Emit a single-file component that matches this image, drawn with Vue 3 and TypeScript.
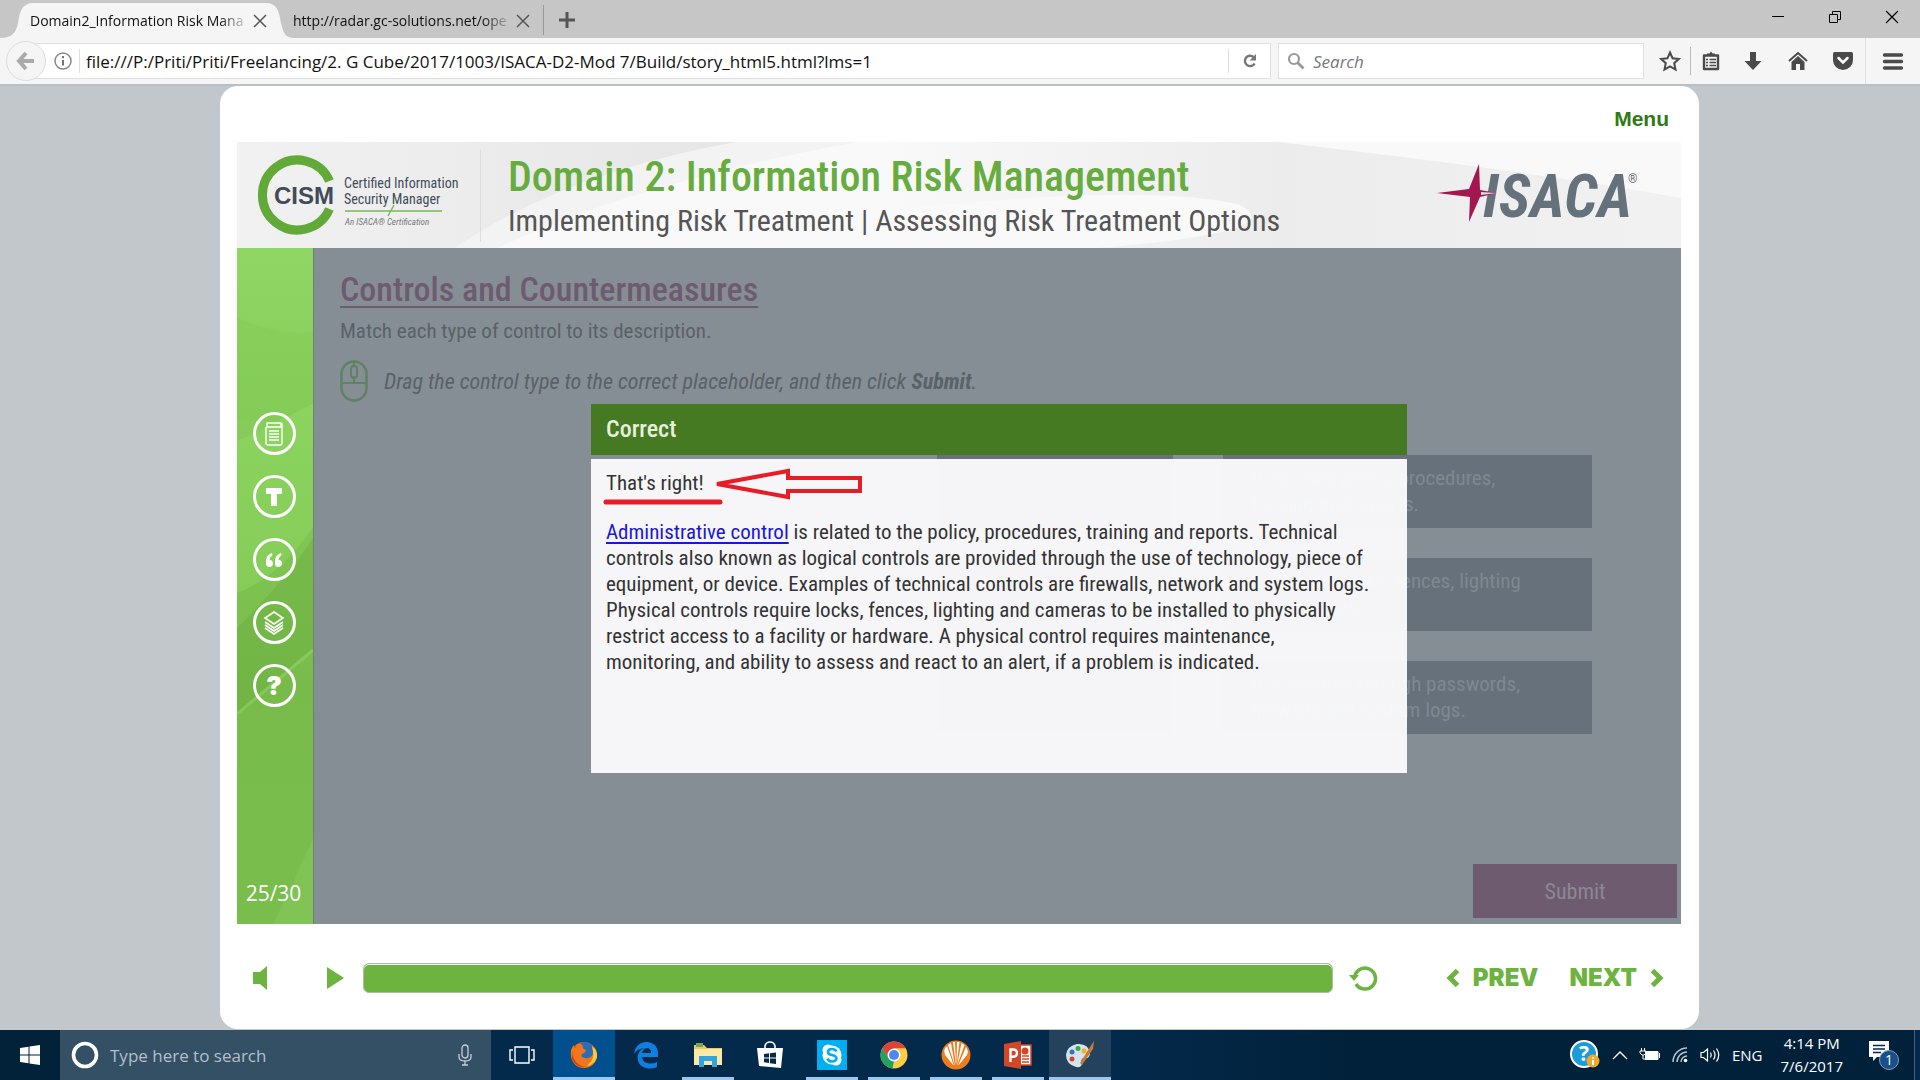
<script setup lang="ts">
interface TaskItem {
  id: string
  label: string
  state: 'idle' | 'open' | 'active' | 'current'
}

const tasks: TaskItem[] = [
  { id: 'view', label: 'Task view', state: 'idle' },
  { id: 'firefox', label: 'Firefox', state: 'current' },
  { id: 'edge', label: 'Edge', state: 'idle' },
  { id: 'files', label: 'File Explorer', state: 'open' },
  { id: 'store', label: 'Store', state: 'idle' },
  { id: 'skype', label: 'Skype', state: 'open' },
  { id: 'chrome', label: 'Chrome', state: 'open' },
  { id: 'shell', label: 'Media', state: 'open' },
  { id: 'ppt', label: 'PowerPoint', state: 'open' },
  { id: 'paint', label: 'Paint', state: 'active' },
]

const sideTools = ['Notes', 'Transcript', 'Glossary', 'Resources', 'Help']

const matches = [
  { control: 'Administrative', text: ['It includes policy, procedures,', 'training and reports.'] },
  { control: 'Physical', text: ['It includes locks, fences, lighting', 'and cameras.'] },
  { control: 'Technical', text: ['It is ensured through passwords,', 'firewalls and system logs.'] },
]

const feedback = [
  ' is related to the policy, procedures, training and reports. Technical',
  'controls also known as logical controls are provided through the use of technology, piece of',
  'equipment, or device. Examples of technical controls are firewalls, network and system logs.',
  'Physical controls require locks, fences, lighting and cameras to be installed to physically',
  'restrict access to a facility or hardware. A physical control requires maintenance,',
  'monitoring, and ability to assess and react to an alert, if a problem is indicated.',
].join('\n')
</script>

<template>
  <div class="desktop">
    <header class="tabs">
      <div class="tab active">
        <svg class="tab-shape" viewBox="0 0 294 35" preserveAspectRatio="none" aria-hidden="true">
          <path d="M0 35C12 35 16 30 18 20C20 8 22 0 34 0H266C277 0 279 8 281 20C283 30 286 35 294 35Z" fill="#f5f5f5" />
        </svg>
        <span class="tab-title">Domain2_Information Risk Mana</span>
        <button class="plain" aria-label="Close tab"><svg width="14" height="14" viewBox="0 0 14 14"><path d="M1 1L13 13M13 1L1 13" stroke="#555" stroke-width="1.5" /></svg></button>
      </div>
      <div class="tab second">
        <span class="tab-title">http://radar.gc-solutions.net/ope</span>
        <button class="plain" aria-label="Close tab"><svg width="14" height="14" viewBox="0 0 14 14"><path d="M1 1L13 13M13 1L1 13" stroke="#555" stroke-width="1.5" /></svg></button>
      </div>
      <button class="plain new-tab" aria-label="New tab"><svg width="16" height="16" viewBox="0 0 16 16"><path d="M8 0V16M0 8H16" stroke="#555" stroke-width="3" /></svg></button>
      <div class="window-buttons">
        <button class="plain" aria-label="Minimize"><svg width="12" height="12" viewBox="0 0 12 12"><path d="M0 5.5H12" stroke="#000" /></svg></button>
        <button class="plain" aria-label="Restore"><svg width="12" height="12" viewBox="0 0 12 12"><path d="M.5 3.500H8.500V11.500H.5ZM3.500 3.500V.5H11.500V8.500H8.500" fill="none" stroke="#000" /></svg></button>
        <button class="plain" aria-label="Close"><svg width="14" height="14" viewBox="0 0 14 14"><path d="M1 1L13 13M13 1L1 13" stroke="#000" stroke-width="1.200" /></svg></button>
      </div>
    </header>

    <nav class="toolbar">
      <button class="back" aria-label="Back"><svg width="20" height="20" viewBox="0 0 20 20"><path d="M10 2L3 10L10 18M4 10H18" fill="none" stroke="#aaa" stroke-width="4" /></svg></button>
      <div class="address">
        <svg class="info" width="18" height="18" viewBox="0 0 18 18"><circle cx="9" cy="9" r="8" fill="none" stroke="#888" stroke-width="1.500" /><path d="M9 8V13.500M9 4V6.200" stroke="#777" stroke-width="2" /></svg>
        <input class="url" aria-label="Address" value="file:///P:/Priti/Priti/Freelancing/2. G Cube/2017/1003/ISACA-D2-Mod 7/Build/story_html5.html?lms=1" />
        <button class="plain reload" aria-label="Reload"><svg width="16" height="16" viewBox="0 0 16 16"><path d="M12.600 10.500A5.200 5.200 0 1 1 11.500 4" fill="none" stroke="#777" stroke-width="2.400" /><path d="M14 1V7.500H7.500Z" fill="#777" /></svg></button>
      </div>
      <div class="search">
        <svg width="18" height="18" viewBox="0 0 18 18"><circle cx="7" cy="7" r="5" fill="none" stroke="#999" stroke-width="2.200" /><path d="M10.500 10.500L16.500 16.500" stroke="#999" stroke-width="2.800" /></svg>
        <input aria-label="Search" placeholder="Search" />
      </div>
      <div class="tools">
        <button class="plain" aria-label="Bookmark"><svg width="22" height="22" viewBox="0 0 22 22"><path d="M11 2.500L13.600 8.300L19.800 9L15.200 13.200L16.500 19.500L11 16.300L5.500 19.500L6.800 13.200L2.200 9L8.400 8.300Z" fill="none" stroke="#4a4a4a" stroke-width="2" /></svg></button>
        <button class="plain clip" aria-label="Bookmarks list"><svg width="20" height="20" viewBox="0 0 20 20"><path d="M3 4.500H17V18H3Z" fill="none" stroke="#4a4a4a" stroke-width="2.400" stroke-linejoin="round" /><path d="M6 4V2.500H8.500L10 .5L11.500 2.500H14V4" fill="#4a4a4a" /><path d="M5 8.500H7M8.500 8.500H15M5 11.500H7M8.500 11.500H15M5 14.500H7M8.500 14.500H15" stroke="#4a4a4a" stroke-width="1.500" /></svg></button>
        <button class="plain" aria-label="Downloads"><svg width="20" height="20" viewBox="0 0 20 20"><path d="M7 1H13V10H18.500L10 19L1.500 10H7Z" fill="#4a4a4a" /></svg></button>
        <button class="plain" aria-label="Home"><svg width="20" height="20" viewBox="0 0 20 20"><path d="M1 10L10 2L19 10" fill="none" stroke="#4a4a4a" stroke-width="2" /><path d="M10 5L16.500 11V19H12V13H8V19H3.500V11Z" fill="#4a4a4a" /></svg></button>
        <button class="plain" aria-label="Pocket"><svg width="22" height="20" viewBox="0 0 22 20"><path d="M2.500 1H19.500Q21 1 21 3V9A10 10 0 0 1 1 9V3Q1 1 2.500 1Z" fill="#4a4a4a" /><path d="M6.500 7L11 11.500L15.500 7" fill="none" stroke="#fff" stroke-width="2.500" stroke-linecap="round" /></svg></button>
        <button class="plain burger" aria-label="Open menu"><svg width="20" height="17" viewBox="0 0 20 17"><path d="M1.500 2H18.500M1.500 8.500H18.500M1.500 15H18.500" stroke="#4a4a4a" stroke-width="3.400" stroke-linecap="round" /></svg></button>
      </div>
    </nav>

    <main class="page">
      <div class="player">
        <div class="menu-row"><button class="plain menu">Menu</button></div>

        <div class="banner">
          <svg class="sheen" viewBox="0 0 1443 106" preserveAspectRatio="none" aria-hidden="true">
            <defs>
              <linearGradient id="sheen-left" x1="0" x2="1"><stop offset="0" stop-color="#f1f1f1" /><stop offset="1" stop-color="#e6e6e6" /></linearGradient>
              <linearGradient id="sheen-right" x1="0" x2="1"><stop offset="0" stop-color="#f9f9f9" /><stop offset=".5" stop-color="#ececec" /><stop offset="1" stop-color="#f1f1f1" /></linearGradient>
            </defs>
            <path d="M0 0H500Q330 30 218 106H0Z" fill="url(#sheen-left)" />
            <path d="M500 0Q330 30 218 106H260Q400 40 620 0Z" fill="#f3f3f3" />
            <path d="M640 0H1040Q1300 30 1443 56V106H860Q1060 90 1000 62Q900 40 640 70Z" fill="url(#sheen-right)" />
          </svg>
          <svg class="cism" width="210" height="90" viewBox="0 0 210 90" role="img" aria-label="CISM">
            <path d="M72.500 31A35 35 0 1 0 72.500 59" fill="none" stroke="#62aa37" stroke-width="9" />
            <text x="17" y="54" class="cism-name">CISM</text>
            <text x="87" y="38" class="cism-line">Certified Information</text>
            <text x="87" y="54" class="cism-line">Security Manager</text>
            <path d="M88 61H185M131 66L137 55" stroke="#79b956" stroke-width="1.500" />
            <text x="88" y="75" class="cism-small">An ISACA® Certification</text>
          </svg>
          <div class="titles">
            <h1>Domain 2: Information Risk Management</h1>
            <h2>Implementing Risk Treatment | Assessing Risk Treatment Options</h2>
          </div>
          <svg class="isaca" width="204" height="64" viewBox="0 0 204 64" role="img" aria-label="ISACA">
            <text x="46" y="54" class="isaca-name">ISACA</text>
            <text x="191" y="20" class="isaca-reg">®</text>
            <path d="M0 30L32 26L42 1L43 27L60 30L43 34L32 59L33 34Z" fill="#a3164f" />
            <path d="M44 29L60 30L44 32Z" fill="#d9dde0" />
          </svg>
        </div>

        <div class="slide">
          <aside class="sidebar">
            <svg class="streaks" viewBox="0 0 76 676" preserveAspectRatio="none" aria-hidden="true">
              <path d="M0 70Q50 90 76 84V155Q40 180 0 170Z" fill="#80c853" opacity=".35" />
              <path d="M0 193Q40 175 76 155V280Q40 330 0 345Z" fill="#93db66" opacity=".4" />
              <path d="M0 380Q50 330 76 290V400L0 468Z" fill="#68ad3c" opacity=".4" />
              <path d="M0 466L76 402" stroke="#93d36a" stroke-width="3" opacity=".6" />
              <path d="M36 676Q54 640 76 590V676Z" fill="#86ca5b" opacity=".5" />
            </svg>
            <div class="side-tools">
              <button v-for="(tool, i) in sideTools" :key="tool" class="round" :aria-label="tool">
                <svg v-if="i === 0" width="22" height="26" viewBox="0 0 22 26"><path d="M4 2H18V6H4ZM3 6V22Q3 24 5 24H17Q19 24 19 22V2M6 10H16M6 13H16M6 16H16M6 19H16" fill="none" stroke="#fff" stroke-width="1.400" /></svg>
                <svg v-else-if="i === 1" width="22" height="22" viewBox="0 0 22 22"><path d="M3 2H19V8H14V20H8V8H3Z" fill="#fff" /></svg>
                <svg v-else-if="i === 2" width="18" height="16" viewBox="0 0 18 16"><path d="M7 1Q1 3 1 9V12A3.500 3.500 0 1 0 4.500 8Q4.500 5 7.500 3ZM16 1Q10 3 10 9V12A3.500 3.500 0 1 0 13.500 8Q13.500 5 16.500 3Z" fill="#fff" /></svg>
                <svg v-else-if="i === 3" width="22" height="26" viewBox="0 0 22 26"><path d="M11 2L20 8L11 14L2 8ZM2 12L11 18L20 12M2 15L11 21L20 15M2 18L11 24L20 18" fill="none" stroke="#fff" stroke-width="1.600" /></svg>
                <span v-else class="question">?</span>
              </button>
            </div>
            <p class="count">25/30</p>
          </aside>

          <section class="stage">
            <h3>Controls and Countermeasures</h3>
            <p class="intro">Match each type of control to its description.</p>
            <p class="hint">
              <svg width="28" height="42" viewBox="0 0 28 42"><rect x="1.500" y="1.500" width="25" height="39" rx="12.500" fill="none" stroke="#5e8262" stroke-width="2.500" /><path d="M2 23H26M14 2V7M14 16V23" stroke="#5e8262" stroke-width="2" /><rect x="11" y="6" width="6" height="12" rx="3" fill="none" stroke="#5e8262" stroke-width="2" /></svg>
              <span>Drag the control type to the correct placeholder, and then click <b>Submit</b>.</span>
            </p>
            <div class="matches">
              <div v-for="m in matches" :key="m.control" class="match">
                <span class="box name"></span>
                <span class="box description"><span v-for="line in m.text" :key="line">{{ line }}</span></span>
              </div>
            </div>
            <button class="submit">Submit</button>

            <div class="dialog" role="dialog" aria-labelledby="result">
              <h4 id="result">Correct</h4>
              <div class="dialog-body">
                <p>That's right!</p>
                <p class="feedback"><a href="#">Administrative control</a>{{ feedback }}</p>
              </div>
              <svg class="mark" width="270" height="44" viewBox="0 0 270 44" aria-hidden="true">
                <path d="M4 39H118" stroke="#e81c24" stroke-width="5" stroke-linecap="round" />
                <path d="M115 21L186 8V15H258V28H186V34Z" fill="none" stroke="#e81c24" stroke-width="4" />
              </svg>
            </div>
          </section>
        </div>

        <footer class="controls">
          <button class="plain volume" aria-label="Volume"><svg width="14" height="24" viewBox="0 0 14 24"><path d="M0 6H7L14 0V24L7 18H0Z" fill="#6cb33f" /></svg></button>
          <button class="plain play" aria-label="Play"><svg width="17" height="22" viewBox="0 0 17 22"><path d="M0 0L17 11L0 22Z" fill="#6cb33f" /></svg></button>
          <div class="seek" role="progressbar" aria-label="Progress" aria-valuenow="100"></div>
          <button class="plain replay" aria-label="Replay"><svg width="28" height="28" viewBox="0 0 28 28"><path d="M5.500 14A10.500 10.500 0 1 1 7 20" fill="none" stroke="#6cb33f" stroke-width="3.600" /><path d="M0 11H10L5 17Z" fill="#6cb33f" /></svg></button>
          <button class="plain nav prev"><svg width="12" height="18" viewBox="0 0 12 18"><path d="M10.500 1.500L3 9L10.500 16.500" fill="none" stroke="#6cb33f" stroke-width="5" /></svg>PREV</button>
          <button class="plain nav next">NEXT<svg width="12" height="18" viewBox="0 0 12 18"><path d="M1.500 1.500L9 9L1.500 16.500" fill="none" stroke="#6cb33f" stroke-width="5" /></svg></button>
        </footer>
      </div>
    </main>

    <footer class="taskbar">
      <button class="plain start" aria-label="Start"><svg width="20" height="20" viewBox="0 0 20 20"><path d="M0 3L8.500 1.800V9.500H0ZM9.500 1.600L20 0V9.500H9.500ZM0 10.500H8.500V18.200L0 17ZM9.500 10.500H20V20L9.500 18.400Z" fill="#fff" /></svg></button>
      <div class="cortana">
        <svg width="28" height="28" viewBox="0 0 28 28"><circle cx="14" cy="14" r="11.500" fill="none" stroke="#fff" stroke-width="3.600" /></svg>
        <input aria-label="Type here to search" placeholder="Type here to search" />
        <svg width="14" height="22" viewBox="0 0 14 22"><rect x="4" y="1" width="6" height="13" rx="3" fill="none" stroke="#c5ced6" stroke-width="1.300" /><path d="M1 10V13Q1 17 7 17T13 13V10M7 17V21M4 21H10" fill="none" stroke="#c5ced6" stroke-width="1.300" /></svg>
      </div>
      <button v-for="t in tasks" :key="t.id" class="plain task" :class="t.state" :aria-label="t.label">
        <svg v-if="t.id === 'view'" width="26" height="20" viewBox="0 0 26 20"><path d="M6 2H20V18H6ZM4 5H1V15H4M22 5H25V15H22" fill="none" stroke="#fff" stroke-width="1.400" /></svg>
        <svg v-else-if="t.id === 'firefox'" width="28" height="28" viewBox="0 0 28 28"><circle cx="14" cy="14" r="13" fill="#e66000" /><circle cx="15" cy="10" r="9" fill="#2a6fb5" /><path d="M7 3Q11 2 13 5Q12 7 14 8Q18 9 14 12Q10 13 12 16Q17 19 22 15Q24 11 22 6Q28 11 27 17Q24 26 14 27Q3 26 1 15Q0 8 4 4Q4 7 6 7Q6 4 7 3Z" fill="#f0761c" /><path d="M22 5Q28 10 27 16Q24 24 17 25Q25 18 23 10Z" fill="#ffcb3a" /><path d="M2 10Q3 23 15 26Q6 27 2 18Z" fill="#d3401a" /></svg>
        <svg v-else-if="t.id === 'edge'" width="26" height="28" viewBox="0 0 26 28"><path d="M1 13Q3 1 14 1Q25 2 25 13V16H9Q10 23 18 22.500Q21 22.500 24 21V26Q20 28 15 27.500Q5 26 4.500 17Q4.500 10 11 7Q4 8 1 13ZM9 12H18Q18 7 13.500 7Q10 8 9 12Z" fill="#1080e0" fill-rule="evenodd" /></svg>
        <svg v-else-if="t.id === 'files'" width="28" height="24" viewBox="0 0 28 24"><path d="M0 2H10L13 5H28V22H0Z" fill="#f0c75e" /><path d="M2 0H9V4H2Z" fill="#6fa85a" /><path d="M0 6H28V22H0Z" fill="#fce9a7" /><path d="M5 13H23V24H18V18H10V24H5Z" fill="#35a3e0" /></svg>
        <svg v-else-if="t.id === 'store'" width="26" height="28" viewBox="0 0 26 28"><path d="M8 8V5Q9 1 13 1T18 5V8" fill="none" stroke="#fff" stroke-width="1.600" /><path d="M0 7H26L24 27L2 25Z" fill="#fff" /><path d="M7 13L12 12.300V16.500H7ZM13 12.200L19 11.500V16.500H13ZM7 17.500H12V22L7 21.300ZM13 17.500H19V23L13 22.200Z" fill="#03294b" /></svg>
        <svg v-else-if="t.id === 'skype'" width="30" height="30" viewBox="0 0 30 30"><path d="M0 0H30V30H0Z" fill="#00aff0" /><circle cx="15" cy="15" r="9.500" fill="#fff" /><circle cx="11" cy="10" r="5.500" fill="#fff" /><circle cx="19" cy="20" r="5.500" fill="#fff" /><path d="M19.500 11.500Q18 9 15 9Q11 9 11 12Q11 14.500 15 15Q19.500 16 19.500 18.500Q19 21.500 15 21.500Q11.500 21.500 10.500 18.500" fill="none" stroke="#00aff0" stroke-width="2.600" /></svg>
        <svg v-else-if="t.id === 'chrome'" width="28" height="28" viewBox="0 0 28 28"><circle cx="14" cy="14" r="13.500" fill="#ffcd41" /><path d="M2.300 7.300A13.500 13.500 0 0 1 25.700 7.300H14L8 17Z" fill="#db4437" /><path d="M2.300 7.300L8.500 17.500L14 20L12.500 27.400A13.500 13.500 0 0 1 2.300 7.300Z" fill="#1da462" /><circle cx="14" cy="14" r="6.500" fill="#fff" /><circle cx="14" cy="14" r="5" fill="#4a8af4" /></svg>
        <svg v-else-if="t.id === 'shell'" width="30" height="30" viewBox="0 0 30 30"><circle cx="15" cy="15" r="14.500" fill="#ee7b1c" /><path d="M13 26L4 15Q2 9 6 6ZM14 26L7 5L10 3ZM15 26L12 2H14ZM15.500 26L16 2H18.500ZM16 26L20.500 3L23.500 5ZM17 26L25 7Q28 11 26 15Z" fill="#fff" /><path d="M10 25H20L18 29H12Z" fill="#ee7b1c" /></svg>
        <svg v-else-if="t.id === 'ppt'" width="28" height="28" viewBox="0 0 28 28"><path d="M16 4H27V24H16Z" fill="#fff" stroke="#d24726" stroke-width="1.500" /><path d="M18 15H25M18 18H25M18 21H25" stroke="#d24726" stroke-width="1.500" /><circle cx="21" cy="10" r="3.500" fill="#d24726" /><path d="M0 3L17 0V28L0 25Z" fill="#d24726" /><path d="M6.500 21V8.500H9Q13 8.500 13 12T9 15.800H7" fill="none" stroke="#fff" stroke-width="2.400" /></svg>
        <svg v-else width="30" height="28" viewBox="0 0 30 28"><path d="M12 3Q24 2 25 13Q24 18 20 17Q15 17 17 22Q17 27 11 26Q1 23 1 14Q2 5 12 3Z" fill="#d3e4f1" /><circle cx="7" cy="11" r="2.500" fill="#3c6fc0" /><circle cx="13" cy="7.500" r="2.500" fill="#45a34a" /><circle cx="19" cy="10" r="2.500" fill="#f0b323" /><circle cx="7" cy="18" r="2.500" fill="#d8402f" /><path d="M15 22L25 6L29 0L28 8L17 24Z" fill="#c77a35" /></svg>
      </button>
      <div class="tray">
        <svg width="30" height="30" viewBox="0 0 30 30"><circle cx="14" cy="14" r="13" fill="#1d9bd8" stroke="#fff" stroke-width="2" /><text x="14" y="21" class="help-mark">?</text><circle cx="23" cy="21" r="6.500" fill="#f0a92c" /><path d="M23 17V18.500M23 20V25" stroke="#fff" stroke-width="2" /></svg>
        <svg width="16" height="10" viewBox="0 0 16 10"><path d="M1 9L8 2L15 9" fill="none" stroke="#fff" stroke-width="1.400" /></svg>
        <svg width="20" height="14" viewBox="0 0 20 14"><path d="M5.500 3.500H18V11.500H5.500Z" fill="#fff" stroke="#fff" /><path d="M19.500 5V10M1.500 0V3M4.500 0V3M0 3H6V5L4 7H2L0 5ZM3 7V11H6" fill="none" stroke="#fff" /></svg>
        <svg width="16" height="16" viewBox="0 0 16 16"><path d="M1 15A14 14 0 0 1 15 1M5 15A10 10 0 0 1 15 5M9 15A6 6 0 0 1 15 9" fill="none" stroke="#b5c0ca" stroke-width="1.500" /><circle cx="13.500" cy="13.500" r="1.800" fill="#fff" /></svg>
        <svg width="20" height="16" viewBox="0 0 20 16"><path d="M1 5.500H3.500L7.500 2V14L3.500 10.500H1ZM10.500 5.500Q12 8 10.500 10.500M13.500 3.500Q16.500 8 13.500 12.500M16.500 1.500Q21 8 16.500 14.500" fill="none" stroke="#fff" stroke-width="1.200" /></svg>
        <span class="lang">ENG</span>
        <span class="clock"><span>4:14 PM</span><span>7/6/2017</span></span>
        <button class="plain notice" aria-label="Notifications"><svg width="32" height="32" viewBox="0 0 32 32"><path d="M1 2H21V18H9L5 22V18H1Z" fill="#fff" /><path d="M5 6.500H17M5 10H17M5 13.500H13" stroke="#03294b" stroke-width="1.300" /><circle cx="21" cy="21" r="9.500" fill="#17508a" stroke="#7f9dbb" /><text x="21" y="26" class="badge">1</text></svg></button>
      </div>
    </footer>
  </div>
</template>

<style>
body {
  margin: 0;
}
</style>

<style scoped>
* {
  box-sizing: border-box;
}
h1, h2, h3, h4, p {
  margin: 0;
  font-weight: 400;
}
svg {
  flex: none;
  display: block;
  overflow: visible;
}
input {
  min-width: 0;
  padding: 0;
  border: 0;
  outline: 0;
  background: transparent;
  font-family: inherit;
}
.plain {
  padding: 0;
  border: 0;
  background: none;
  font-family: inherit;
}
.desktop {
  display: flex;
  flex-direction: column;
  min-height: 100vh;
  background: #c1c7cb;
  font-family: "Open Sans", "Noto Sans", sans-serif;
}

/* Browser window */
.tabs {
  display: flex;
  height: 38px;
  background: #c6c6c6;
}
.tab {
  position: relative;
  display: flex;
  align-items: center;
  gap: 8px;
  width: 261px;
  padding-top: 3px;
}
.tab.active {
  width: 282px;
  padding-left: 30px;
}
.tab-shape {
  position: absolute;
  left: 0;
  bottom: 0;
  width: 294px;
  height: 35px;
}
.tab-title {
  position: relative;
  width: 215px;
  white-space: nowrap;
  font-size: 14px;
  line-height: 24px;
  color: #111;
  mask-image: linear-gradient(to right, #000 190px, transparent 220px);
}
.tab .plain {
  position: relative;
}
.tab.second {
  padding-left: 11px;
}
.new-tab {
  width: 46px;
  height: 30px;
  margin-top: 5px;
  border-left: 1px solid #999;
  display: flex;
  align-items: center;
  justify-content: center;
}
.window-buttons {
  display: flex;
  margin-left: auto;
  height: 34px;
}
.window-buttons .plain {
  width: 57px;
  display: flex;
  align-items: center;
  justify-content: center;
}
.toolbar {
  display: flex;
  align-items: center;
  height: 48px;
  padding: 0 0 0 6px;
  border-bottom: 2px solid #b9bfc2;
  background: #f5f5f5;
}
.back {
  position: relative;
  z-index: 1;
  display: flex;
  align-items: center;
  justify-content: center;
  width: 40px;
  height: 40px;
  margin-right: -14px;
  padding: 0;
  border: 1px solid #ddd;
  border-radius: 50%;
  background: #f5f5f5;
}
.address {
  flex: 1;
  display: flex;
  align-items: center;
  height: 36px;
  padding-left: 21px;
  border: 1px solid #e0e0e0;
  background: #fff;
}
.url {
  flex: 1;
  height: 24px;
  margin-left: 7px;
  padding-left: 6px;
  border-left: 1px solid #ddd;
  font-size: 17px;
  color: #111;
}
.reload {
  display: flex;
  align-items: center;
  justify-content: center;
  width: 42px;
  height: 24px;
  border-left: 1px solid #ddd;
}
.search {
  display: flex;
  align-items: center;
  gap: 8px;
  width: 366px;
  height: 36px;
  margin-left: 7px;
  padding: 0 8px;
  border: 1px solid #e0e0e0;
  background: #fff;
}
.search input {
  flex: 1;
  font-size: 17px;
  font-style: italic;
}
.search input::placeholder {
  color: #777;
}
.tools {
  display: flex;
  align-items: center;
  height: 46px;
  margin-left: 6px;
}
.tools .plain {
  display: flex;
  align-items: center;
  justify-content: center;
  width: 45px;
  height: 28px;
}
.tools .plain:first-child {
  width: 40px;
}
.tools .clip {
  border-left: 1px solid #bbb;
  width: 40px;
}
.tools .burger {
  width: 55px;
  height: 46px;
  border-left: 1px solid #e0e0e0;
}

/* Course player */
.page {
  flex: 1;
  display: flex;
  padding: 0 221px 1px 220px;
}
.player {
  flex: 1;
  min-width: 0;
  display: flex;
  flex-direction: column;
  padding: 0 18px 0 17px;
  border-radius: 18px;
  background: #fff;
  font-family: "Roboto Condensed", "Arial Narrow", "Liberation Sans", sans-serif;
}
.menu-row {
  display: flex;
  justify-content: flex-end;
  height: 56px;
  padding: 20px 12px 0 0;
}
.menu {
  height: 26px;
  font: bold 21px/26px "Liberation Sans", Arial, sans-serif;
  color: #2f7a12;
}
.banner {
  position: relative;
  display: flex;
  align-items: center;
  height: 106px;
  padding: 0 40px 0 20px;
  background: #f9f9f9;
}
.sheen {
  position: absolute;
  inset: 0;
  width: 100%;
  height: 100%;
}
.cism, .titles, .isaca {
  position: relative;
}
.cism-name {
  font: bold 24px "Liberation Sans", Arial, sans-serif;
  fill: #414b5a;
}
.cism-line {
  font-size: 14px;
  fill: #414b5a;
}
.cism-small {
  font-size: 9px;
  font-style: italic;
  fill: #777;
}
.titles {
  margin-left: 13px;
  padding: 5px 0 0 27px;
  border-left: 1px solid #ddd;
  white-space: nowrap;
}
.titles h1 {
  font-size: 42px;
  font-weight: 500;
  line-height: 46px;
  color: #66ac3f;
}
.titles h2 {
  font-size: 30px;
  line-height: 42px;
  color: #555;
}
.isaca {
  margin-left: auto;
}
.isaca-name {
  font-size: 60px;
  font-weight: bold;
  font-style: italic;
  fill: #65727b;
}
.isaca-reg {
  font-size: 12px;
  fill: #65727b;
}
.slide {
  flex: 1;
  display: flex;
}
.sidebar {
  position: relative;
  display: flex;
  flex-direction: column;
  width: 76px;
  background: linear-gradient(#90d664, #82c957 35%, #78bb4a 65%, #79be4d);
}
.streaks {
  position: absolute;
  inset: 0;
  width: 100%;
  height: 100%;
  overflow: hidden;
}
.side-tools {
  position: relative;
  display: flex;
  flex-direction: column;
  align-items: center;
  gap: 20px;
  padding: 164px 2px 0 0;
}
.round {
  display: flex;
  align-items: center;
  justify-content: center;
  width: 43px;
  height: 43px;
  padding: 0;
  border: 3px solid #fff;
  border-radius: 50%;
  background: none;
}
.question {
  font: 900 26px/36px Inter, "Open Sans", sans-serif;
  color: #fff;
}
.count {
  position: relative;
  margin-top: auto;
  padding: 0 3px 16px 0;
  font: 21px/30px "Open Sans", sans-serif;
  text-align: center;
  color: #fff;
}
.stage {
  position: relative;
  flex: 1;
  display: flex;
  flex-direction: column;
  align-items: flex-start;
  padding: 20px 4px 6px 26px;
  border-left: 1px solid #747c83;
  background: #868e95;
  color: #5b6168;
  white-space: nowrap;
}
.stage h3 {
  font-size: 34px;
  line-height: 42px;
  font-weight: 500;
  color: #6e5b6f;
  text-decoration: underline;
  text-decoration-thickness: 2px;
  text-underline-offset: 5px;
}
.intro {
  font-size: 21px;
  line-height: 26px;
  margin-top: 8px;
}
.hint {
  display: flex;
  align-items: center;
  gap: 16px;
  height: 42px;
  margin-top: 16px;
  font-size: 22px;
  font-style: italic;
}
.matches {
  display: flex;
  flex-direction: column;
  gap: 30px;
  align-self: stretch;
  margin-top: 53px;
  padding-right: 85px;
}
.match {
  display: flex;
  justify-content: flex-end;
  height: 73px;
  font-size: 21px;
  line-height: 26px;
  color: #7f8890;
}
.box {
  display: flex;
  flex-direction: column;
  background: #67717b;
}
.name {
  width: 236px;
  margin-right: 50px;
}
.description {
  width: 369px;
  padding: 10px 0 0 28px;
}
.submit {
  align-self: flex-end;
  width: 204px;
  height: 54px;
  margin-top: auto;
  padding: 0;
  border: 0;
  background: #6e5b6f;
  font-family: inherit;
  font-size: 22px;
  color: #8d8794;
}
.dialog {
  position: absolute;
  left: 277px;
  top: 156px;
  width: 816px;
}
.dialog h4 {
  height: 51px;
  padding-left: 15px;
  background: #457a22;
  font-size: 24px;
  font-weight: 500;
  line-height: 51px;
  color: #e6f0df;
}
.dialog-body {
  height: 314px;
  margin-top: 4px;
  padding: 11px 0 0 15px;
  background: rgba(248, 248, 250, 0.98);
  font-size: 21px;
  line-height: 26px;
  color: #333;
}
.feedback {
  margin-top: 23px;
  white-space: pre;
}
.feedback a {
  color: #1a16dc;
  text-decoration-thickness: 2px;
  text-underline-offset: 3px;
}
.mark {
  position: absolute;
  left: 11px;
  top: 59px;
}
.controls {
  display: flex;
  align-items: center;
  height: 105px;
  padding: 2px 18px 0 16px;
}
.play {
  margin-left: 60px;
}
.seek {
  flex: 1;
  height: 30px;
  margin-left: 19px;
  border: 1px solid #aebba5;
  border-radius: 6px;
  background: #6cb33f;
  box-shadow: inset 0 1px #fff;
}
.replay {
  margin-left: 16px;
}
.nav {
  display: flex;
  align-items: center;
  gap: 14px;
  font: 900 24px/30px Inter, "Liberation Sans", sans-serif;
  color: #6cb33f;
}
.prev {
  margin-left: 70px;
}
.next {
  margin-left: 31px;
}

/* Desktop taskbar */
.taskbar {
  display: flex;
  height: 50px;
  background: #03294b;
  color: #fff;
}
.start {
  display: flex;
  align-items: center;
  justify-content: center;
  width: 60px;
  background: #012238;
}
.cortana {
  display: flex;
  align-items: center;
  gap: 11px;
  width: 431px;
  padding: 0 19px 0 11px;
  background: #335065;
}
.cortana input {
  flex: 1;
  font-size: 17px;
}
.cortana input::placeholder {
  color: #b4bfc9;
}
.task {
  position: relative;
  display: flex;
  align-items: center;
  justify-content: center;
  width: 62px;
}
.task.open::after, .task.active::after, .task.current::after {
  content: "";
  position: absolute;
  left: 5px;
  right: 5px;
  bottom: 0;
  height: 3px;
  background: #9cc8f0;
}
.task.active::after, .task.current::after {
  left: 0;
  right: 0;
}
.task.current {
  background: #00508f;
}
.task.active {
  background: #24425d;
}
.tray {
  flex: 1;
  display: flex;
  align-items: center;
  justify-content: flex-end;
  gap: 12px;
  margin-right: 5px;
  padding-right: 14px;
  border-right: 1px solid #4a6077;
  background: linear-gradient(to right, #03294b, #01213a 30%);
}
.help-mark {
  font: bold 21px "Open Sans", sans-serif;
  text-anchor: middle;
  fill: #fff;
}
.badge {
  font: 14px "Open Sans", sans-serif;
  text-anchor: middle;
  fill: #fff;
}
.lang {
  font-size: 15px;
}
.clock {
  display: flex;
  flex-direction: column;
  align-items: center;
  margin: 0 13px 0 6px;
  font-size: 15px;
  line-height: 23px;
}
</style>
